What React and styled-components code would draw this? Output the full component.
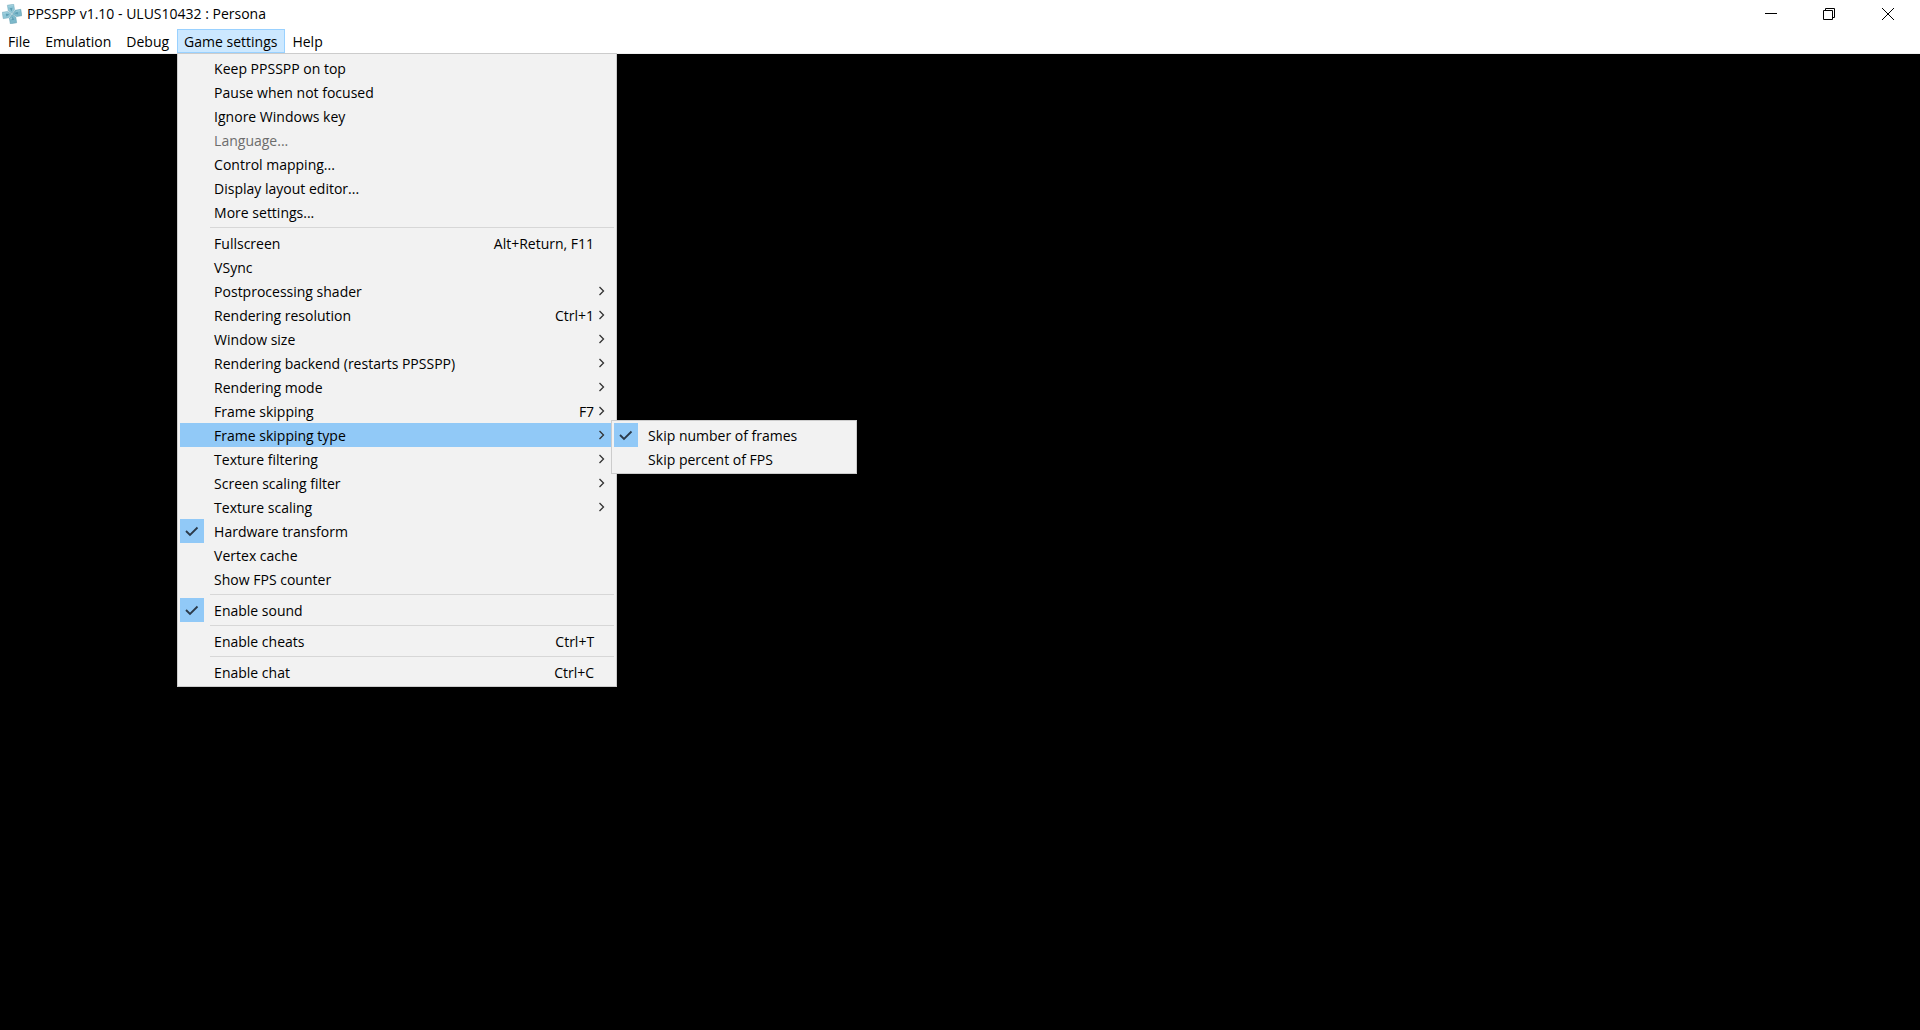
import React from "react";
import styled, { createGlobalStyle, css } from "styled-components";

const titleButtons = [
  { name: "Minimize", path: "M0 6.5h12" },
  { name: "Restore", path: "M0.5 3.5h9v9h-9zM2.5 3.5v-2h9v9h-2" },
  { name: "Close", path: "M1 1l12 12M13 1L1 13" },
];

const skipTypes = [
  { label: "Skip number of frames", checked: true },
  { label: "Skip percent of FPS" },
];

const gameSettings = [
  [
    { label: "Keep PPSSPP on top", type: "check" },
    { label: "Pause when not focused", type: "check" },
    { label: "Ignore Windows key", type: "check" },
    { label: "Language...", disabled: true },
    { label: "Control mapping..." },
    { label: "Display layout editor..." },
    { label: "More settings..." },
  ],
  [
    { label: "Fullscreen", type: "check", shortcut: "Alt+Return, F11" },
    { label: "VSync", type: "check" },
    { label: "Postprocessing shader", type: "submenu" },
    { label: "Rendering resolution", type: "submenu", shortcut: "Ctrl+1" },
    { label: "Window size", type: "submenu" },
    { label: "Rendering backend (restarts PPSSPP)", type: "submenu" },
    { label: "Rendering mode", type: "submenu" },
    { label: "Frame skipping", type: "submenu", shortcut: "F7" },
    { label: "Frame skipping type", type: "submenu", options: skipTypes },
    { label: "Texture filtering", type: "submenu" },
    { label: "Screen scaling filter", type: "submenu" },
    { label: "Texture scaling", type: "submenu" },
    { label: "Hardware transform", type: "check", checked: true },
    { label: "Vertex cache", type: "check" },
    { label: "Show FPS counter", type: "check" },
  ],
  [{ label: "Enable sound", type: "check", checked: true }],
  [{ label: "Enable cheats", type: "check", shortcut: "Ctrl+T" }],
  [{ label: "Enable chat", type: "check", shortcut: "Ctrl+C" }],
];

function Logo() {
  return (
    <svg width="20" height="20" viewBox="0 0 20 20" aria-hidden="true">
      <g transform="rotate(-9 10 10)" strokeWidth="0.5" strokeLinejoin="round">
        <g fill="#8fc6d6" stroke="#79aebf">
          <path d="M6.8 0.6h6.4v5.6L10 9.4 6.800 6.200z" />
          <path d="M0.6 6.8v6.4h5.600L9.400 10 6.200 6.800z" />
        </g>
        <g fill="#7db9cb" stroke="#5d9bb0">
          <path d="M6.8 19.4h6.4v-5.600L10 10.600l-3.200 3.200z" />
          <path d="M19.4 6.8v6.4h-5.600L10.600 10l3.200-3.200z" />
        </g>
        <g fill="#5f9fb5">
          <path d="M8.500 4h3L10 7.500z" />
          <path d="M8.500 16h3L10 12.500z" />
          <path d="M4 8.500v3L7.500 10z" />
          <path d="M16 8.500v3L12.500 10z" />
        </g>
        <path d="M7.500 1.800h5M1.500 8h4M14.500 8h4M7.500 14.500h2" stroke="#b9dde8" />
      </g>
    </svg>
  );
}

function Tick() {
  return (
    <svg width="24" height="24" viewBox="0 0 24 24" aria-hidden="true">
      <path d="M6 12l4 4 7.500-7.500" fill="none" stroke="#2b3a4a" strokeWidth="1.800" />
    </svg>
  );
}

function Arrow() {
  return (
    <svg width="6" height="10" viewBox="0 0 6 10" aria-hidden="true">
      <path d="M0.5 1l4 4-4 4" fill="none" stroke="#333" strokeWidth="1.300" />
    </svg>
  );
}

function CheckItem({ item, inputType, group }) {
  return (
    <CheckRow>
      <Mark>
        <input type={inputType} name={group} defaultChecked={item.checked} />
        <Tick />
      </Mark>
      <Label>{item.label}</Label>
      {item.shortcut && <Shortcut>{item.shortcut}</Shortcut>}
    </CheckRow>
  );
}

function MenuItem({ item }) {
  if (item.type === "check") {
    return <CheckItem item={item} inputType="checkbox" />;
  }
  const hasSubmenu = item.type === "submenu";
  return (
    <ItemHolder>
      <ButtonRow
        type="button"
        disabled={item.disabled}
        aria-haspopup={hasSubmenu ? "menu" : undefined}
        $open={Boolean(item.options)}
      >
        <Mark />
        <Label>{item.label}</Label>
        {item.shortcut && <Shortcut>{item.shortcut}</Shortcut>}
        {hasSubmenu && (
          <ArrowCell>
            <Arrow />
          </ArrowCell>
        )}
      </ButtonRow>
      {item.options && (
        <Submenu>
          {item.options.map((option) => (
            <CheckItem
              key={option.label}
              item={option}
              inputType="radio"
              group="skip-type"
            />
          ))}
        </Submenu>
      )}
    </ItemHolder>
  );
}

function App() {
  return (
    <Window>
      <GlobalStyle />
      <TitleBar>
        <Logo />
        <Title>PPSSPP v1.10 - ULUS10432 : Persona</Title>
        {titleButtons.map((button) => (
          <TitleButton key={button.name} type="button" aria-label={button.name}>
            <svg width="14" height="14" viewBox="0 0 14 14">
              <path d={button.path} fill="none" stroke="#000" />
            </svg>
          </TitleButton>
        ))}
      </TitleBar>
      <MenuBar>
        <MenuBarButton type="button">File</MenuBarButton>
        <MenuBarButton type="button">Emulation</MenuBarButton>
        <MenuBarButton type="button">Debug</MenuBarButton>
        <MenuHolder>
          <MenuBarButton type="button" aria-expanded="true" $open>
            Game settings
          </MenuBarButton>
          <Menu>
            {gameSettings.map((group, index) => (
              <React.Fragment key={group[0].label}>
                {index > 0 && <Separator />}
                {group.map((item) => (
                  <MenuItem key={item.label} item={item} />
                ))}
              </React.Fragment>
            ))}
          </Menu>
        </MenuHolder>
        <MenuBarButton type="button">Help</MenuBarButton>
      </MenuBar>
      <Screen />
    </Window>
  );
}

export default App;

const GlobalStyle = createGlobalStyle`
  * {
    box-sizing: border-box;
  }
  body {
    margin: 0;
    background: #000;
  }
  body, button, input {
    font-family: "Segoe UI", "Open Sans", "Noto Sans", sans-serif;
    font-size: 14px;
    line-height: 20px;
  }
`;

const Window = styled.div`
  display: flex;
  flex-direction: column;
  min-height: 100vh;
  color: #000;
`;

const TitleBar = styled.header`
  display: flex;
  align-items: center;
  height: 29px;
  padding: 0 3px 1px 2px;
  background: #fff;
`;

const Title = styled.h1`
  flex: 1;
  margin: 0;
  padding-left: 5px;
  font-size: 14px;
  font-weight: 400;
`;

const TitleButton = styled.button`
  display: grid;
  place-items: center;
  width: 58px;
  height: 28px;
  padding: 0;
  border: 0;
  background: none;
`;

const MenuBar = styled.nav`
  display: flex;
  height: 25px;
  padding-left: 1px;
  border-bottom: 1px solid #f0f0f0;
  background: #fff;
`;

const MenuBarButton = styled.button`
  height: 24px;
  padding: 2px 7px 0 6px;
  border: 1px solid ${({ $open }) => ($open ? "#99d1ff" : "transparent")};
  background: ${({ $open }) => ($open ? "#cce8ff" : "none")};
  color: inherit;
`;

const MenuHolder = styled.div`
  position: relative;
`;

const Menu = styled.div`
  position: absolute;
  top: 100%;
  left: 0;
  z-index: 1;
  min-width: 440px;
  padding: 2px;
  border: 1px solid #ccc;
  background: #f2f2f2;
`;

const Submenu = styled(Menu)`
  top: -3px;
  left: calc(100% - 3px);
  min-width: 246px;
`;

const ItemHolder = styled.div`
  position: relative;
`;

const row = css`
  display: flex;
  align-items: center;
  width: 100%;
  height: 24px;
  white-space: nowrap;
`;

const ButtonRow = styled.button`
  ${row}
  padding: 0;
  border: 0;
  background: ${({ $open }) => ($open ? "#91c9f7" : "none")};
  color: inherit;
  text-align: left;
  &:disabled {
    color: #6d6d6d;
  }
`;

const CheckRow = styled.label`
  ${row}
`;

const Mark = styled.span`
  display: grid;
  flex: none;
  width: 24px;
  height: 24px;
  margin-right: 10px;
  input,
  svg {
    grid-area: 1 / 1;
  }
  input {
    appearance: none;
    width: 24px;
    height: 24px;
    margin: 0;
  }
  input:checked {
    background: #91c9f7;
  }
  svg {
    visibility: hidden;
  }
  input:checked + svg {
    visibility: visible;
  }
`;

const Label = styled.span`
  flex: 1;
  padding-top: 2px;
`;

const Shortcut = styled.span`
  padding-top: 2px;
  margin-right: 20px;
  & + span {
    margin-left: -15px;
  }
`;

const ArrowCell = styled.span`
  display: flex;
  width: 15px;
`;

const Separator = styled.hr`
  height: 1px;
  margin: 3px 0 3px 30px;
  border: 0;
  background: #d7d7d7;
`;

const Screen = styled.main`
  flex: 1;
  background: #000;
`;
